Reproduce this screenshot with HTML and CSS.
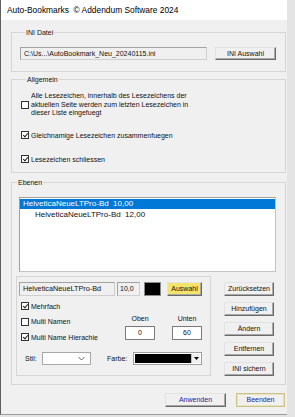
FILE: index.html
```html
<!DOCTYPE html>
<html>
<head>
  <meta charset="utf-8">
  <title>Auto-Bookmarks</title>
  <link rel="stylesheet" href="styles.css">
</head>
<body>
<div class="window">

  <div class="titlebar">Auto-Bookmarks&nbsp; © Addendum Software 2024</div>

  <fieldset class="group group-ini">
    <legend>INI Datei</legend>
    <div class="ini-row">
      <div class="field ini-path">C:\Us...\AutoBookmark_Neu_20240115.ini</div>
      <button class="btn ini-btn">INI Auswahl</button>
    </div>
  </fieldset>

  <fieldset class="group group-general">
    <legend>Allgemein</legend>
    <div class="check check-multi">
      <span class="box"></span>
      <span class="label">Alle Lesezeichen, innerhalb des Lesezeichens der<br>aktuellen Seite werden zum letzten Lesezeichen in<br>dieser Liste eingefuegt</span>
    </div>
    <div class="check check-merge">
      <span class="box on"></span>
      <span class="label">Gleichnamige Lesezeichen zusammenfuegen</span>
    </div>
    <div class="check check-close">
      <span class="box on"></span>
      <span class="label">Lesezeichen schliessen</span>
    </div>
  </fieldset>

  <fieldset class="group group-levels">
    <legend>Ebenen</legend>
    <div class="listbox">
      <div class="item selected">HelveticaNeueLTPro-Bd&nbsp; 10,00</div>
      <div class="item indent">HelveticaNeueLTPro-Bd&nbsp; 12,00</div>
    </div>

    <div class="levels-bottom">
      <div class="panel">
        <div class="font-row">
          <div class="field font-name">HelveticaNeueLTPro-Bd</div>
          <div class="field font-size">10,0</div>
          <div class="swatch"></div>
          <button class="btn pick">Auswahl</button>
        </div>

        <div class="mid-row">
          <div class="checks">
            <div class="check"><span class="box on"></span><span class="label">Mehrfach</span></div>
            <div class="check"><span class="box"></span><span class="label">Multi Namen</span></div>
            <div class="check"><span class="box on"></span><span class="label">Multi Name Hierachie</span></div>
          </div>
          <div class="spin">
            <div class="spin-label">Oben</div>
            <div class="num">0</div>
          </div>
          <div class="spin">
            <div class="spin-label">Unten</div>
            <div class="num">60</div>
          </div>
        </div>

        <div class="style-row">
          <span class="lbl-stil">Stil:</span>
          <div class="combo">
            <svg width="7" height="5" viewBox="0 0 7 5"><path d="M0.5 1 L3.5 4 L6.5 1" fill="none" stroke="#666" stroke-width="1"/></svg>
          </div>
          <span class="lbl-farbe">Farbe:</span>
          <div class="color-combo">
            <div class="color-fill"></div>
            <div class="drop"><svg width="5" height="3" viewBox="0 0 5 3"><path d="M0 0 H5 L2.5 3 Z" fill="#000"/></svg></div>
          </div>
        </div>
      </div>

      <div class="side-buttons">
        <button class="btn side">Zurücksetzen</button>
        <button class="btn side">Hinzufügen</button>
        <button class="btn side">Ändern</button>
        <button class="btn side">Entfernen</button>
        <button class="btn side">INI sichern</button>
      </div>
    </div>
  </fieldset>

  <div class="footer">
    <button class="btn foot apply">Anwenden</button>
    <button class="btn foot close">Beenden</button>
  </div>

</div>
</body>
</html>
```

FILE: styles.css
```css
html, body {
  height: 100%;
  margin: 0;
}
body {
  background-color: #e4e4e4;
  font-family: "Liberation Sans", Arial, sans-serif;
  font-size: 7px;
  color: #111;
  overflow: hidden;
}

.window {
  width: 287px;
  height: 415px;
  box-sizing: border-box;
  background: #f0f0f0;
  border-left: 1px solid #5e5e5e;
  border-bottom: 1px solid #9c9c9c;
  display: flex;
  flex-direction: column;
}

.titlebar {
  height: 20px;
  line-height: 20px;
  background: #fff;
  padding-left: 6px;
  font-size: 8.4px;
  color: #000;
  flex: none;
}

/* group boxes */
.group {
  box-sizing: border-box;
  width: 275px;
  margin: 0 0 0 10px;
  padding: 0;
  border: 1px solid #d6d6d6;
  min-width: 0;
}
.group legend {
  margin-left: 5px;
  padding: 0 1px;
  line-height: 9px;
  height: 9px;
}

.group-ini { margin-top: 8px; padding: 10px 0 11px 8px; }
.group-general { margin-top: 3px; padding: 8px 0 8px 9px; }
.group-levels { margin-top: 5px; padding: 10px 0 8px 0; }

.ini-row {
  display: flex;
  gap: 8px;
}

.field {
  box-sizing: border-box;
  height: 13px;
  line-height: 11px;
  padding-left: 3px;
  background: #f0f0f0;
  border: 1px solid #a3a3a3;
  border-right-color: #cfcfcf;
  border-bottom-color: #cfcfcf;
  white-space: nowrap;
  overflow: hidden;
}
.ini-path { width: 187px; }

.btn {
  box-sizing: border-box;
  font-family: inherit;
  font-size: 7px;
  color: #111;
  background: #f0f0f0;
  border: 1px solid;
  border-color: #e3e3e3 #6a6a6a #6a6a6a #e3e3e3;
  box-shadow: inset -1px -1px 0 #a8a8a8;
  padding: 0;
  margin: 0;
  line-height: 11px;
}
.ini-btn { width: 61px; height: 13px; }

/* checkboxes */
.check {
  display: flex;
  align-items: center;
  gap: 2px;
}
.box {
  box-sizing: border-box;
  width: 8px;
  height: 8px;
  background: #fff;
  border: 1px solid #333;
  flex: none;
  position: relative;
}
.box.on::after {
  content: "";
  position: absolute;
  left: 2px;
  top: 0px;
  width: 2px;
  height: 4px;
  border: solid #222;
  border-width: 0 1px 1px 0;
  transform: rotate(40deg);
}
.check .label { line-height: 9px; }
.check-multi .label { line-height: 8.5px; }
.check-merge { margin-top: 13px; }
.check-close { margin-top: 15px; }

/* list */
.listbox {
  box-sizing: border-box;
  width: 257px;
  height: 75px;
  margin-left: 7px;
  background: #fff;
  border: 1px solid #a0a0a0;
  border-right-color: #c4c4c4;
  border-bottom-color: #c4c4c4;
  font-size: 8px;
}
.item {
  height: 10px;
  line-height: 10px;
  padding-left: 3px;
  white-space: nowrap;
}
.item.selected {
  background: #0078d7;
  color: #fff;
  margin-top: 1px;
}
.item.indent { padding-left: 15px; margin-top: 1px; }

.levels-bottom {
  display: flex;
  margin-top: 4px;
  margin-left: 4px;
}

.panel {
  box-sizing: border-box;
  width: 195px;
  height: 100px;
  border: 1px solid #d6d6d6;
  padding: 5px 0 0 2px;
}

.font-row {
  display: flex;
  align-items: center;
}
.font-row .field { height: 14px; line-height: 12px; }
.font-name { width: 96px; font-size: 7.3px; }
.font-size { width: 23px; margin-left: 2px; padding-left: 2px; }
.swatch {
  width: 17px;
  height: 14px;
  box-sizing: border-box;
  background: #000;
  border: 1px solid #8a8a8a;
  margin-left: 4px;
}
.pick {
  width: 35px;
  height: 14px;
  margin-left: 6px;
  background: #f4e46c;
}

.mid-row {
  display: flex;
}
.checks {
  width: 104px;
  padding: 6px 0 0 2px;
  display: flex;
  flex-direction: column;
  gap: 6.5px;
}
.spin {
  width: 30px;
  margin-top: 18px;
  text-align: center;
}
.spin + .spin { margin-left: 17px; }
.spin-label { line-height: 9px; }
.num {
  box-sizing: border-box;
  height: 14px;
  line-height: 12px;
  margin-top: 3px;
  background: #fff;
  border: 1px solid #7a7a7a;
}

.style-row {
  display: flex;
  align-items: center;
  margin-top: 10px;
  padding-left: 6px;
}
.lbl-stil { width: 17px; }
.combo {
  box-sizing: border-box;
  width: 49px;
  height: 13px;
  background: #fff;
  border: 1px solid #a8a8a8;
  display: flex;
  align-items: center;
  justify-content: flex-end;
  padding-right: 5px;
}
.lbl-farbe { width: 26px; margin-left: 16px; }
.color-combo {
  box-sizing: border-box;
  width: 69px;
  height: 13px;
  border: 1px solid #a0a0a0;
  background: #fff;
  display: flex;
  padding: 1px;
}
.color-fill { flex: 1; background: #000; }
.drop {
  width: 8px;
  background: #f0f0f0;
  border-left: 1px solid #c0c0c0;
  display: flex;
  align-items: center;
  justify-content: center;
}

.side-buttons {
  display: flex;
  flex-direction: column;
  gap: 6px;
  margin-left: 13px;
  padding-top: 6px;
}
.side { width: 50px; height: 14px; }

.footer {
  display: flex;
  margin-top: 8px;
  padding-left: 164px;
  gap: 10px;
}
.foot { height: 14px; color: #24249a; }
.apply { width: 61px; }
.close {
  width: 49px;
  border-color: #c9c28a;
  box-shadow: inset 0 0 0 1px #e8e3b8;
}
```
